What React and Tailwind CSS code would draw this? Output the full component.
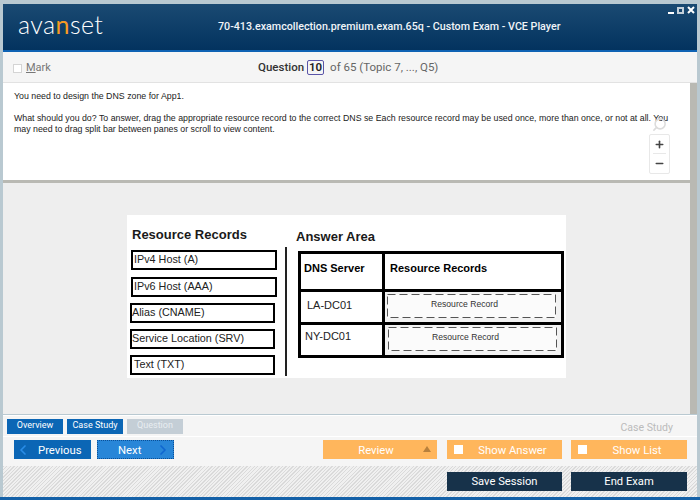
import { ChevronLeft, ChevronRight, Minus, Plus, Search } from 'lucide-react'

const records = [
  { label: 'IPv4 Host (A)', box: 'ml-[4px] mb-[7px] w-[146px]', text: 'pl-[1px]' },
  { label: 'IPv6 Host (AAA)', box: 'ml-[4px] mb-[6px] w-[146px] border-[#333]', text: 'pl-[1px]' },
  { label: 'Alias (CNAME)', box: 'ml-[3px] mb-[6px] w-[145px]', text: 'pl-0' },
  { label: 'Service Location (SRV)', box: 'ml-[3px] mb-[6px] w-[145px]', text: 'pl-0' },
  { label: 'Text (TXT)', box: 'ml-[3px] w-[145px]', text: 'pl-[2px]' },
]

function OrangeButton({ label, width, check }) {
  return (
    <div className={`${width} h-[19px] pt-[3px] bg-[#ffb65c] flex items-center text-white`}>
      {check && <span className="w-[9px] h-[9px] -mt-[3px] bg-white ml-[7px]" />}
      <span className="flex-1 text-center">{label}</span>
    </div>
  )
}

function DropSlot() {
  return (
    <div className="relative h-[24px] w-[169px] bg-[#fbfbfb] flex items-center justify-center pr-[14px] pb-[3px] text-[8.6px] text-[#333]">
      <svg className="absolute inset-0" width="169" height="24" viewBox="0 0 169 24">
        <rect x="0.5" y="0.5" width="168" height="23" fill="none" stroke="#555" strokeDasharray="8 4" />
      </svg>
      Resource Record
    </div>
  )
}

export default function App() {
  return (
    <div className="w-[700px] h-[500px] overflow-hidden bg-[#b9c9d1] pt-[4px] px-[3px] flex flex-col font-['Roboto',sans-serif]">
      {/* title bar */}
      <div className="relative h-[46px] shrink-0 bg-gradient-to-b from-[#1a4a72] to-[#03335f] flex items-center">
        <div className="ml-[15px] w-[86px] mt-[-6px] font-['Lato',sans-serif] font-light text-[25px] leading-none tracking-[0.4px] text-white">
          ava<span className="text-[#f59a23] font-normal">n</span>set
        </div>
        <div className="ml-[114px] mt-[1px] text-[10.7px] font-medium text-[#f0f4f8]">
          70-413.examcollection.premium.exam.65q - Custom Exam - VCE Player
        </div>
        <div className="absolute right-[2px] top-[2px] flex items-center gap-[3px] text-white">
          <span className="w-[6px] h-[2px] bg-white mt-[5px]" />
          <span className="w-[7px] h-[7px] border-2 border-[#c4d0da]" />
          <svg width="8" height="8" viewBox="0 0 8 8">
            <path d="M1 1 L7 7 M7 1 L1 7" stroke="white" strokeWidth="2" />
          </svg>
        </div>
      </div>
      <div className="h-[2px] shrink-0 bg-[#0f63b4]" />

      {/* mark / question number bar */}
      <div className="h-[31px] shrink-0 bg-[#f5f5f5] border-b border-[#e2e2e2] flex items-center relative">
        <span className="ml-[10px] mt-[2px] w-[9px] h-[9px] bg-white border border-[#d4d4d4]" />
        <span className="ml-[4px] mt-[3px] text-[11px] text-[#777]"><u>M</u>ark</span>
        <div className="absolute left-[255px] top-[7px] flex items-center text-[11.5px]">
          <span className="font-medium text-[#333]">Question</span>
          <span className="ml-[3px] w-[17px] h-[15px] leading-[13px] text-center border border-[#5b55a8] rounded-[2px] font-semibold text-[#222]">10</span>
          <span className="ml-[6px] text-[#666]">of 65 (Topic 7, ..., Q5)</span>
        </div>
      </div>

      {/* question + exhibit */}
      <div className="h-[331px] shrink-0 flex">
        <div className="flex-1 flex flex-col min-w-0">
          <div className="relative h-[97px] shrink-0 bg-white pt-[8px] pl-[11px] pr-[18px] font-['Liberation_Sans',sans-serif] text-[8.8px] leading-[11px] text-[#222]">
            <p>You need to design the DNS zone for App1.</p>
            <p className="mt-[11px]">
              What should you do? To answer, drag the appropriate resource record to the correct DNS se Each resource record may be used once, more than once, or not at all. You may need to drag split bar between panes or scroll to view content.
            </p>
            <Search className="absolute left-[649px] top-[34px] w-[15px] h-[15px] text-[#dcdcdc] -scale-x-100" strokeWidth={2.5} />
            <div className="absolute left-[646px] top-[51px] w-[21px] h-[40px] bg-white border border-[#e8e8e8] rounded-[2px] flex flex-col items-center">
              <Plus className="w-[11px] h-[11px] mt-[4px] text-[#444]" strokeWidth={3.5} />
              <span className="w-[13px] h-px bg-[#e8e8e8] mt-[3px]" />
              <Minus className="w-[11px] h-[11px] mt-[4px] text-[#444]" strokeWidth={3.5} />
            </div>
          </div>
          <div className="h-[3px] shrink-0 bg-[#b9b9b3]" />

          <div className="flex-1 bg-[#eeeeee] pl-[124px] pt-[32px]">
            <div className="w-[439px] h-[163px] bg-white flex font-['Liberation_Sans',sans-serif] text-black">
              <div className="w-[158px] shrink-0 pt-[12px] relative">
                <div className="ml-[5px] text-[13px] leading-[16px] font-bold text-[#1a1a1a] mb-[7px]">Resource Records</div>
                {records.map(({ label, box, text }) => (
                  <div key={label} className={`${box} h-[20px] border-2 border-black flex items-center text-[10.8px] text-[#222]`}>
                    <span className={`${text} mt-[-2px]`}>{label}</span>
                  </div>
                ))}
                <div className="absolute left-[158px] top-[32px] w-[2px] h-[129px] bg-[#222]" />
              </div>

              <div className="flex-1 pt-[14px] pl-[11px]">
                <div className="text-[13px] leading-[16px] font-bold text-[#1a1a1a] mb-[6px]">Answer Area</div>
                <div className="ml-[2px] w-[266px] h-[107px] border-[3px] border-black bg-black grid grid-cols-[81px_1fr] grid-rows-[35px_30px_1fr] gap-[3px]">
                  <div className="bg-white flex items-center pl-[3px] pb-[6px] text-[11px] font-bold">DNS Server</div>
                  <div className="bg-white flex items-center pl-[5px] pb-[6px] text-[11px] font-bold">Resource Records</div>
                  <div className="bg-white flex items-center pl-[6px] pb-[3px] text-[11px] text-[#222]">LA-DC01</div>
                  <div className="bg-[#f2f2f2] pt-[2px] pl-[2px]">
                    <DropSlot />
                  </div>
                  <div className="bg-white pl-[4px] pt-[4px] text-[11px] leading-[14px] text-[#222]">NY-DC01</div>
                  <div className="bg-[#f2f2f2] pt-[2px] pl-[3px]">
                    <DropSlot />
                  </div>
                </div>
              </div>
            </div>
          </div>
        </div>
        <div className="w-[7px] shrink-0 bg-[#b9b9b3]" />
      </div>

      {/* bottom tabs */}
      <div className="h-[21px] shrink-0 mt-px bg-[#f5f5f5] border-t border-white flex items-center pl-[4px] gap-[4px] relative text-[9px]">
        <div className="w-[56px] h-[15px] bg-[#0b66b5] text-white flex items-center justify-center">Overview</div>
        <div className="w-[56px] h-[15px] bg-[#0b66b5] text-white flex items-center justify-center">Case Study</div>
        <div className="w-[56px] h-[15px] bg-[#c4ced6] text-[#e8edf1] flex items-center justify-center">Question</div>
        <div className="absolute right-[24px] top-[4px] text-[10.5px] text-[#bbb]">Case Study</div>
      </div>

      {/* buttons */}
      <div className="h-[30px] shrink-0 bg-[#f5f5f5] border-t border-white flex items-start pt-[3px] pl-[11px] text-[11.3px]">
        <div className="w-[77px] h-[19px] pt-[3px] bg-[#0b66b5] text-white flex items-center">
          <ChevronLeft className="w-[16px] h-[16px] -mt-[2px] text-[#2a8de8] ml-px" strokeWidth={2.5} />
          <span className="ml-[7px]">Previous</span>
        </div>
        <div className="ml-[6px] w-[77px] h-[19px] pt-[3px] bg-[#2886d8] border border-dotted border-[#0b4f96] text-white flex items-center">
          <span className="ml-[20px]">Next</span>
          <ChevronRight className="w-[16px] h-[16px] -mt-[2px] text-[#0f66d0] ml-[14px]" strokeWidth={2.5} />
        </div>
        <div className="ml-[149px] w-[114px] h-[19px] pt-[3px] bg-[#ffb65c] text-white flex items-center relative pr-[8px]">
          <span className="flex-1 text-center">Review</span>
          <svg className="absolute right-[6px] top-[6px]" width="8" height="6" viewBox="0 0 8 6">
            <path d="M4 0 L8 6 L0 6 Z" fill="#b8803c" />
          </svg>
        </div>
        <div className="ml-[10px]"><OrangeButton label="Show Answer" width="w-[115px]" check /></div>
        <div className="ml-[9px]"><OrangeButton label="Show List" width="w-[116px]" check /></div>
      </div>

      {/* session strip */}
      <div className="h-[31px] shrink-0 bg-[repeating-linear-gradient(135deg,#dadada_0,#dadada_1px,#f0f0f0_1px,#f0f0f0_2.5px)] flex items-start pt-[6px] pl-[444px] gap-[9px] text-[11.2px] text-white">
        <div className="w-[115px] h-[19px] pt-[2px] bg-[#17324a] flex items-center justify-center">Save Session</div>
        <div className="w-[116px] h-[19px] pt-[2px] bg-[#17324a] flex items-center justify-center">End Exam</div>
      </div>
      <div className="h-[3px] shrink-0 -mx-[3px] bg-[#1461a8]" />
    </div>
  )
}
